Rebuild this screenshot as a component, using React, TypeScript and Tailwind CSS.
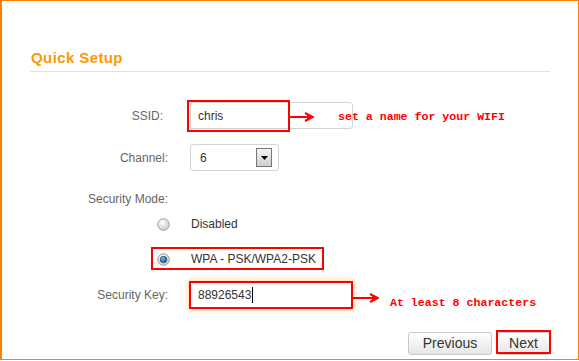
import React from 'react';

function Arrow({ width }: { width: number }) {
  return (
    <svg width={width} height={12} viewBox={`0 0 ${width} 12`} className="block">
      <line x1={0} y1={6} x2={width - 3} y2={6} stroke="#ff0000" strokeWidth={2} />
      <path d={`M${width - 9} 2 L${width - 1} 6 L${width - 9} 10`} fill="none" stroke="#ff0000" strokeWidth={2} />
      <line x1={width - 6} y1={3} x2={width - 6} y2={9} stroke="#ff0000" strokeWidth={2} />
    </svg>
  );
}

function Radio({ checked }: { checked?: boolean }) {
  return (
    <svg width={13} height={13} viewBox="0 0 13 13" className="block">
      <defs>
        <radialGradient id={checked ? 'rg1' : 'rg0'} cx="40%" cy="35%" r="70%">
          <stop offset="0%" stopColor="#ffffff" />
          <stop offset="100%" stopColor="#c8c8c8" />
        </radialGradient>
        <radialGradient id="dot" cx="40%" cy="35%" r="70%">
          <stop offset="0%" stopColor="#6fc4f2" />
          <stop offset="100%" stopColor="#0a4f86" />
        </radialGradient>
      </defs>
      <circle cx={6.5} cy={6.5} r={5.8} fill={`url(#${checked ? 'rg1' : 'rg0'})`} stroke="#a0a0a0" strokeWidth={1} />
      {checked && <circle cx={6.5} cy={6.5} r={3.3} fill="url(#dot)" stroke="#1b3f5e" strokeWidth={0.6} />}
    </svg>
  );
}

export default function App() {
  return (
    <div className="w-[579px] h-[360px] bg-white border-t border-l-2 border-r border-b border-[#ff8000] font-['Liberation_Sans',Arial,sans-serif] text-[12px]">
      {/* Header */}
      <div className="ml-[28px] w-[520px] mt-[48px] pb-[4px] pl-[1px] border-b border-[#e0e0e0]">
        <h2 className="text-[15px] leading-[18px] font-bold tracking-[0.4px] text-[#ff9900]">Quick Setup</h2>
      </div>

      {/* SSID */}
      <div className="flex items-center mt-[30px] h-[27px]">
        <label className="w-[161px] text-right text-[#666]">SSID:</label>
        <div className="relative ml-[27px]">
          <div className="w-[163px] h-[27px] border border-[#d4d4d4] rounded-[3px] flex items-center pl-[7px] text-[#333]">
            chris
          </div>
          <div className="absolute left-[-3px] top-[-2px] w-[103px] h-[32px] border-2 border-[#ff0000]" />
          <div className="absolute left-[100px] top-[9px]">
            <Arrow width={24} />
          </div>
          <div className="absolute left-[148px] top-[7px] whitespace-nowrap font-['Liberation_Mono',monospace] font-bold text-[11.6px] leading-[16px] text-[#ff0000]">
            set a name for your WIFI
          </div>
        </div>
      </div>

      {/* Channel */}
      <div className="flex items-center mt-[15px] h-[27px]">
        <label className="w-[166px] text-right text-[#666]">Channel:</label>
        <div className="ml-[22px] w-[89px] h-[27px] border border-[#d4d4d4] rounded-[3px] flex items-center justify-between pl-[9px] pr-[6px] text-[#333]">
          <span>6</span>
          <div className="w-[16px] h-[19px] border border-[#777] bg-gradient-to-b from-[#f4f4f4] to-[#cfcfcf] flex items-center justify-center">
            <svg width={7} height={4} viewBox="0 0 7 4">
              <path d="M0 0 H7 L3.5 4 Z" fill="#000" />
            </svg>
          </div>
        </div>
      </div>

      {/* Security mode */}
      <div className="flex mt-[20px] h-[16px] items-center">
        <label className="w-[166px] text-right text-[#666]">Security Mode:</label>
      </div>

      <div className="flex items-center mt-[9px] h-[16px] pl-[155px] text-[#333]">
        <Radio />
        <span className="ml-[21px]">Disabled</span>
      </div>

      <div className="relative flex items-center mt-[19px] h-[16px] pl-[155px] text-[#333]">
        <Radio checked />
        <span className="ml-[21px]">WPA - PSK/WPA2-PSK</span>
        <div className="absolute left-[149px] top-[-4px] w-[173px] h-[23px] border-2 border-[#ff0000]" />
      </div>

      {/* Security key */}
      <div className="flex items-center mt-[14px] h-[28px]">
        <label className="w-[166px] text-right text-[#666]">Security Key:</label>
        <div className="relative ml-[21px]">
          <div className="w-[164px] h-[28px] border-2 border-[#ff0000] shadow-[0_0_6px_rgba(255,150,0,0.55)] flex items-center pl-[7px] text-[#333]">
            88926543
            <span className="inline-block w-px h-[16px] bg-black ml-[1px]" />
          </div>
          <div className="absolute left-[164px] top-[11px]">
            <Arrow width={26} />
          </div>
          <div className="absolute left-[201px] top-[14px] whitespace-nowrap font-['Liberation_Mono',monospace] font-bold text-[11.6px] leading-[16px] text-[#ff0000]">
            At least 8 characters
          </div>
        </div>
      </div>

      {/* Buttons */}
      <div className="flex justify-end gap-[5px] mt-[23px] pr-[28px]">
        <button className="w-[84px] h-[23px] border border-[#c8c8c8] rounded-[3px] bg-gradient-to-b from-white to-[#e6e6e6] text-[14px] text-[#333]">
          Previous
        </button>
        <div className="relative">
          <button className="w-[53px] h-[23px] border border-[#c8c8c8] rounded-[3px] bg-gradient-to-b from-white to-[#e6e6e6] text-[14px] text-[#333]">
            Next
          </button>
          <div className="absolute left-[-1px] top-[-2px] w-[55px] h-[24px] border-2 border-[#ff0000]" />
        </div>
      </div>
    </div>
  );
}
